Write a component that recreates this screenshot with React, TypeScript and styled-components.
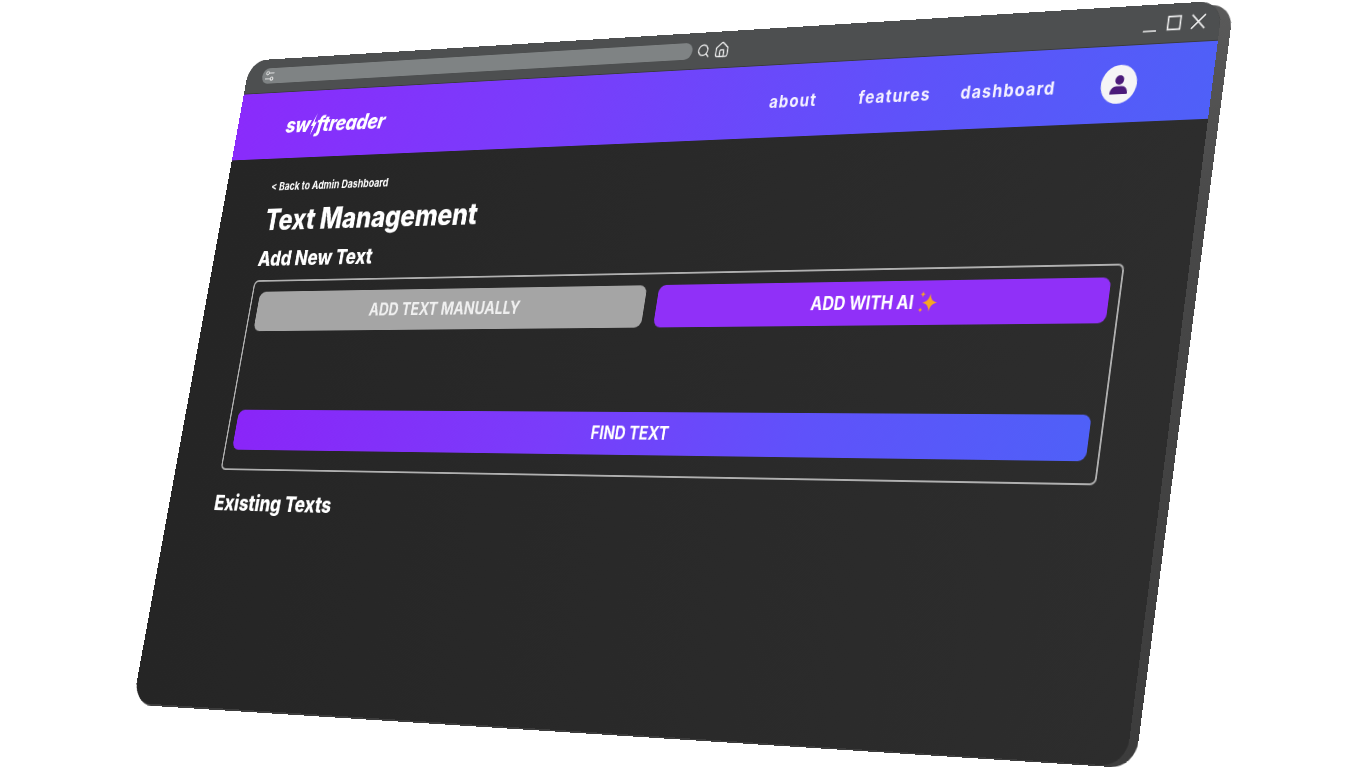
import React from 'react';
import styled, { createGlobalStyle } from 'styled-components';
import { House, Search } from 'lucide-react';

type Point = [number, number];

// flat size of the mocked browser window, everything inside is laid out in these pixels
const FLAT_W = 1280;
const FLAT_H = 768;

// maps the flat window on to a quad (top-left, top-right, bottom-right, bottom-left)
const quadMatrix = ([p0, p1, p2, p3]: Point[]) => {
  const dx1 = p1[0] - p2[0];
  const dx2 = p3[0] - p2[0];
  const sx = p0[0] - p1[0] + p2[0] - p3[0];
  const dy1 = p1[1] - p2[1];
  const dy2 = p3[1] - p2[1];
  const sy = p0[1] - p1[1] + p2[1] - p3[1];
  const det = dx1 * dy2 - dx2 * dy1;
  const g = (sx * dy2 - dx2 * sy) / det;
  const h = (dx1 * sy - sx * dy1) / det;
  const a = p1[0] - p0[0] + g * p1[0];
  const b = p3[0] - p0[0] + h * p3[0];
  const d = p1[1] - p0[1] + g * p1[1];
  const e = p3[1] - p0[1] + h * p3[1];
  const values = [
    a / FLAT_W, d / FLAT_W, 0, g / FLAT_W,
    b / FLAT_H, e / FLAT_H, 0, h / FLAT_H,
    0, 0, 1, 0,
    p0[0], p0[1], 0, 1,
  ];
  return `matrix3d(${values.join(',')})`;
};

const faceQuad: Point[] = [[250, 60.7], [1223, 0.5], [1126, 766.5], [133, 702.7]];
const sideQuad: Point[] = [[258, 63.7], [1234, 3.5], [1135, 768.5], [134, 704.7]];

const GlobalStyle = createGlobalStyle`
  html, body {
    margin: 0;
    padding: 0;
    background: #ffffff;
    overflow: hidden;
  }
  * {
    box-sizing: border-box;
  }
`;

const Stage = styled.div`
  position: relative;
  width: 1366px;
  height: 768px;
  overflow: hidden;
  background: #ffffff;
  font-family: Inter, 'Liberation Sans', sans-serif;
  filter: blur(0.35px);
`;

const WindowSide = styled.div`
  position: absolute;
  left: 0;
  top: 0;
  width: ${FLAT_W}px;
  height: ${FLAT_H}px;
  border-radius: 26px;
  background: linear-gradient(180deg, #5a5a5a 0%, #484848 30%, #3c3c3c 100%);
  transform-origin: 0 0;
  transform: ${quadMatrix(sideQuad)};
`;

const WindowFace = styled.div`
  position: absolute;
  left: 0;
  top: 0;
  width: ${FLAT_W}px;
  height: ${FLAT_H}px;
  display: flex;
  flex-direction: column;
  overflow: hidden;
  border-radius: 26px;
  background: linear-gradient(90deg, #252525 0%, #2d2d2d 100%);
  transform-origin: 0 0;
  transform: ${quadMatrix(faceQuad)};
`;

const TitleBar = styled.div`
  flex: 0 0 42px;
  display: flex;
  align-items: center;
  padding: 0 16px 0 24px;
  background: #4d4f50;
  border-bottom: 1px solid #3a3b3c;
  color: #f0f0f0;
`;

const AddressBar = styled.div`
  width: 617px;
  height: 19px;
  margin-right: 6px;
  display: flex;
  align-items: center;
  padding-left: 4px;
  border-radius: 10px;
  background: #7f8384;
`;

const BarIcons = styled.div`
  display: flex;
  align-items: center;
  gap: 5px;
`;

const WindowControls = styled.div`
  margin-left: auto;
  display: flex;
  align-items: center;
  gap: 10px;
  color: #f2f2f2;
`;

const NavBar = styled.nav`
  flex: 0 0 81px;
  display: flex;
  align-items: center;
  padding: 0 85px 0 75px;
  background: linear-gradient(100deg, #8a2bfb 0%, #7a3cfb 35%, #5f52fa 72%, #4f60f8 100%);
  color: #ffffff;
`;

const Logo = styled.div`
  display: flex;
  align-items: center;
  font-size: 26px;
  font-weight: 800;
  font-style: italic;
  letter-spacing: -0.4px;
`;

const NavLink = styled.a<{ $gap: number }>`
  margin-left: ${props => props.$gap}px;
  font-size: 19px;
  font-weight: 700;
  letter-spacing: 1.4px;
  color: #f4f1ff;
`;

const NavLinks = styled.div`
  margin-left: auto;
  padding-top: 2px;
  display: flex;
  align-items: center;
`;

const Avatar = styled.div`
  width: 41px;
  height: 41px;
  margin-left: 52px;
  display: flex;
  align-items: center;
  justify-content: center;
  border-radius: 50%;
  background: #f5f4f6;
`;

const Main = styled.main`
  flex: 1;
  display: flex;
  flex-direction: column;
  padding: 26px 72px 0 69px;
  color: #ffffff;
`;

const BackLink = styled.a`
  font-size: 13px;
  line-height: 16px;
  font-weight: 700;
  color: #ffffff;
`;

const PageTitle = styled.h1`
  margin: 10px 0 0;
  font-size: 35px;
  line-height: 44px;
  font-weight: 800;
`;

const SectionTitle = styled.h2<{ $top: number }>`
  margin: ${props => props.$top}px 0 0;
  font-size: 25px;
  line-height: 30px;
  font-weight: 800;
`;

const Panel = styled.section`
  margin-top: 11px;
  height: 225px;
  padding: 12px 11px 20px 10px;
  border: 2.5px solid #b0b0b0;
  border-radius: 7px;
`;

const ModeRow = styled.div`
  display: grid;
  grid-template-columns: 1fr 1fr;
  gap: 16px;
`;

const ActionButton = styled.button<{ $variant: 'muted' | 'accent' | 'gradient' }>`
  display: flex;
  align-items: center;
  justify-content: center;
  gap: 5px;
  width: 100%;
  height: 47px;
  padding: 0 0 2px;
  border: none;
  border-radius: 9px;
  font-family: inherit;
  font-size: 19.5px;
  font-weight: 700;
  color: #ffffff;

  ${props => props.$variant === 'muted' && `
    background: #a5a5a5;
    color: #f0f0f0;
  `}

  ${props => props.$variant === 'accent' && `
    background: #9030f8;
  `}

  ${props => props.$variant === 'gradient' && `
    background: linear-gradient(95deg, #8a25f8 0%, #7a3cfa 40%, #5f52fa 70%, #4f60f8 100%);
  `}
`;

const FindRow = styled.div`
  height: 47px;
  margin: 93px 2px 0 0;
`;

const App: React.FC = () => {
  return (
    <>
      <GlobalStyle />
      <Stage>
        <WindowSide />
        <WindowFace>
          <TitleBar>
            <AddressBar>
              <svg width="15" height="15" viewBox="0 0 15 15" fill="none" stroke="#f0f0f0" strokeWidth="1.2">
                <circle cx="4" cy="4" r="2" />
                <path d="M6 4h8M1 11h8" />
                <circle cx="11" cy="11" r="2" />
              </svg>
            </AddressBar>
            <BarIcons>
              <Search size={18} strokeWidth={2} />
              <House size={20} strokeWidth={1.8} />
            </BarIcons>
            <WindowControls>
              <svg width="17" height="17" viewBox="0 0 16 16" fill="none" stroke="currentColor" strokeWidth="1.4">
                <path d="M1 15h14" />
              </svg>
              <svg width="17" height="17" viewBox="0 0 16 16" fill="none" stroke="currentColor" strokeWidth="1.6">
                <rect x="1.5" y="1.5" width="13" height="13" />
              </svg>
              <svg width="17" height="17" viewBox="0 0 16 16" fill="none" stroke="currentColor" strokeWidth="1.5">
                <path d="M1 1l14 14M15 1L1 15" />
              </svg>
            </WindowControls>
          </TitleBar>

          <NavBar>
            <Logo>
              sw
              <svg width="10" height="26" viewBox="0 0 9 26" fill="#ffffff">
                <path d="M7.5 0L0.5 15h3.4L1.5 26 8.500 10.500H5z" />
              </svg>
              ftreader
            </Logo>
            <NavLinks>
              <NavLink $gap={0}>about</NavLink>
              <NavLink $gap={52}>features</NavLink>
              <NavLink $gap={36}>dashboard</NavLink>
            </NavLinks>
            <Avatar>
              <svg width="22" height="22" viewBox="0 0 22 22" fill="#4b1a7a">
                <circle cx="11" cy="6" r="5" />
                <path d="M2 21c-.6 0-1-.4-1-1 0-4.500 3.400-7.500 7-7.500h6c3.600 0 7 3 7 7.500 0 .6-.4 1-1 1z" />
              </svg>
            </Avatar>
          </NavBar>

          <Main>
            <BackLink>&lt; Back to Admin Dashboard</BackLink>
            <PageTitle>Text Management</PageTitle>
            <SectionTitle $top={10}>Add New Text</SectionTitle>
            <Panel>
              <ModeRow>
                <ActionButton $variant="muted">ADD TEXT MANUALLY</ActionButton>
                <ActionButton $variant="accent">
                  ADD WITH AI
                  <svg width="24" height="26" viewBox="0 0 24 26" fill="#f6a623">
                    <path d="M14 4c1 6 3 8 9 9.500-6 1.500-8 3.500-9 9.500-1-6-3-8-9-9.500 6-1.500 8-3.500 9-9.500z" />
                    <path d="M5 1c.4 2.200 1 3 3 3.500-2 .5-2.600 1.300-3 3.500-.4-2.200-1-3-3-3.500 2-.5 2.600-1.300 3-3.500z" />
                    <path d="M4 18c.3 1.800.8 2.400 2.500 3-1.700.5-2.200 1.200-2.500 3-.3-1.800-.8-2.500-2.500-3 1.700-.6 2.200-1.200 2.500-3z" />
                  </svg>
                </ActionButton>
              </ModeRow>
              <FindRow>
                <ActionButton $variant="gradient">FIND TEXT</ActionButton>
              </FindRow>
            </Panel>
            <SectionTitle $top={23}>Existing Texts</SectionTitle>
          </Main>
        </WindowFace>
      </Stage>
    </>
  );
};

export default App;
